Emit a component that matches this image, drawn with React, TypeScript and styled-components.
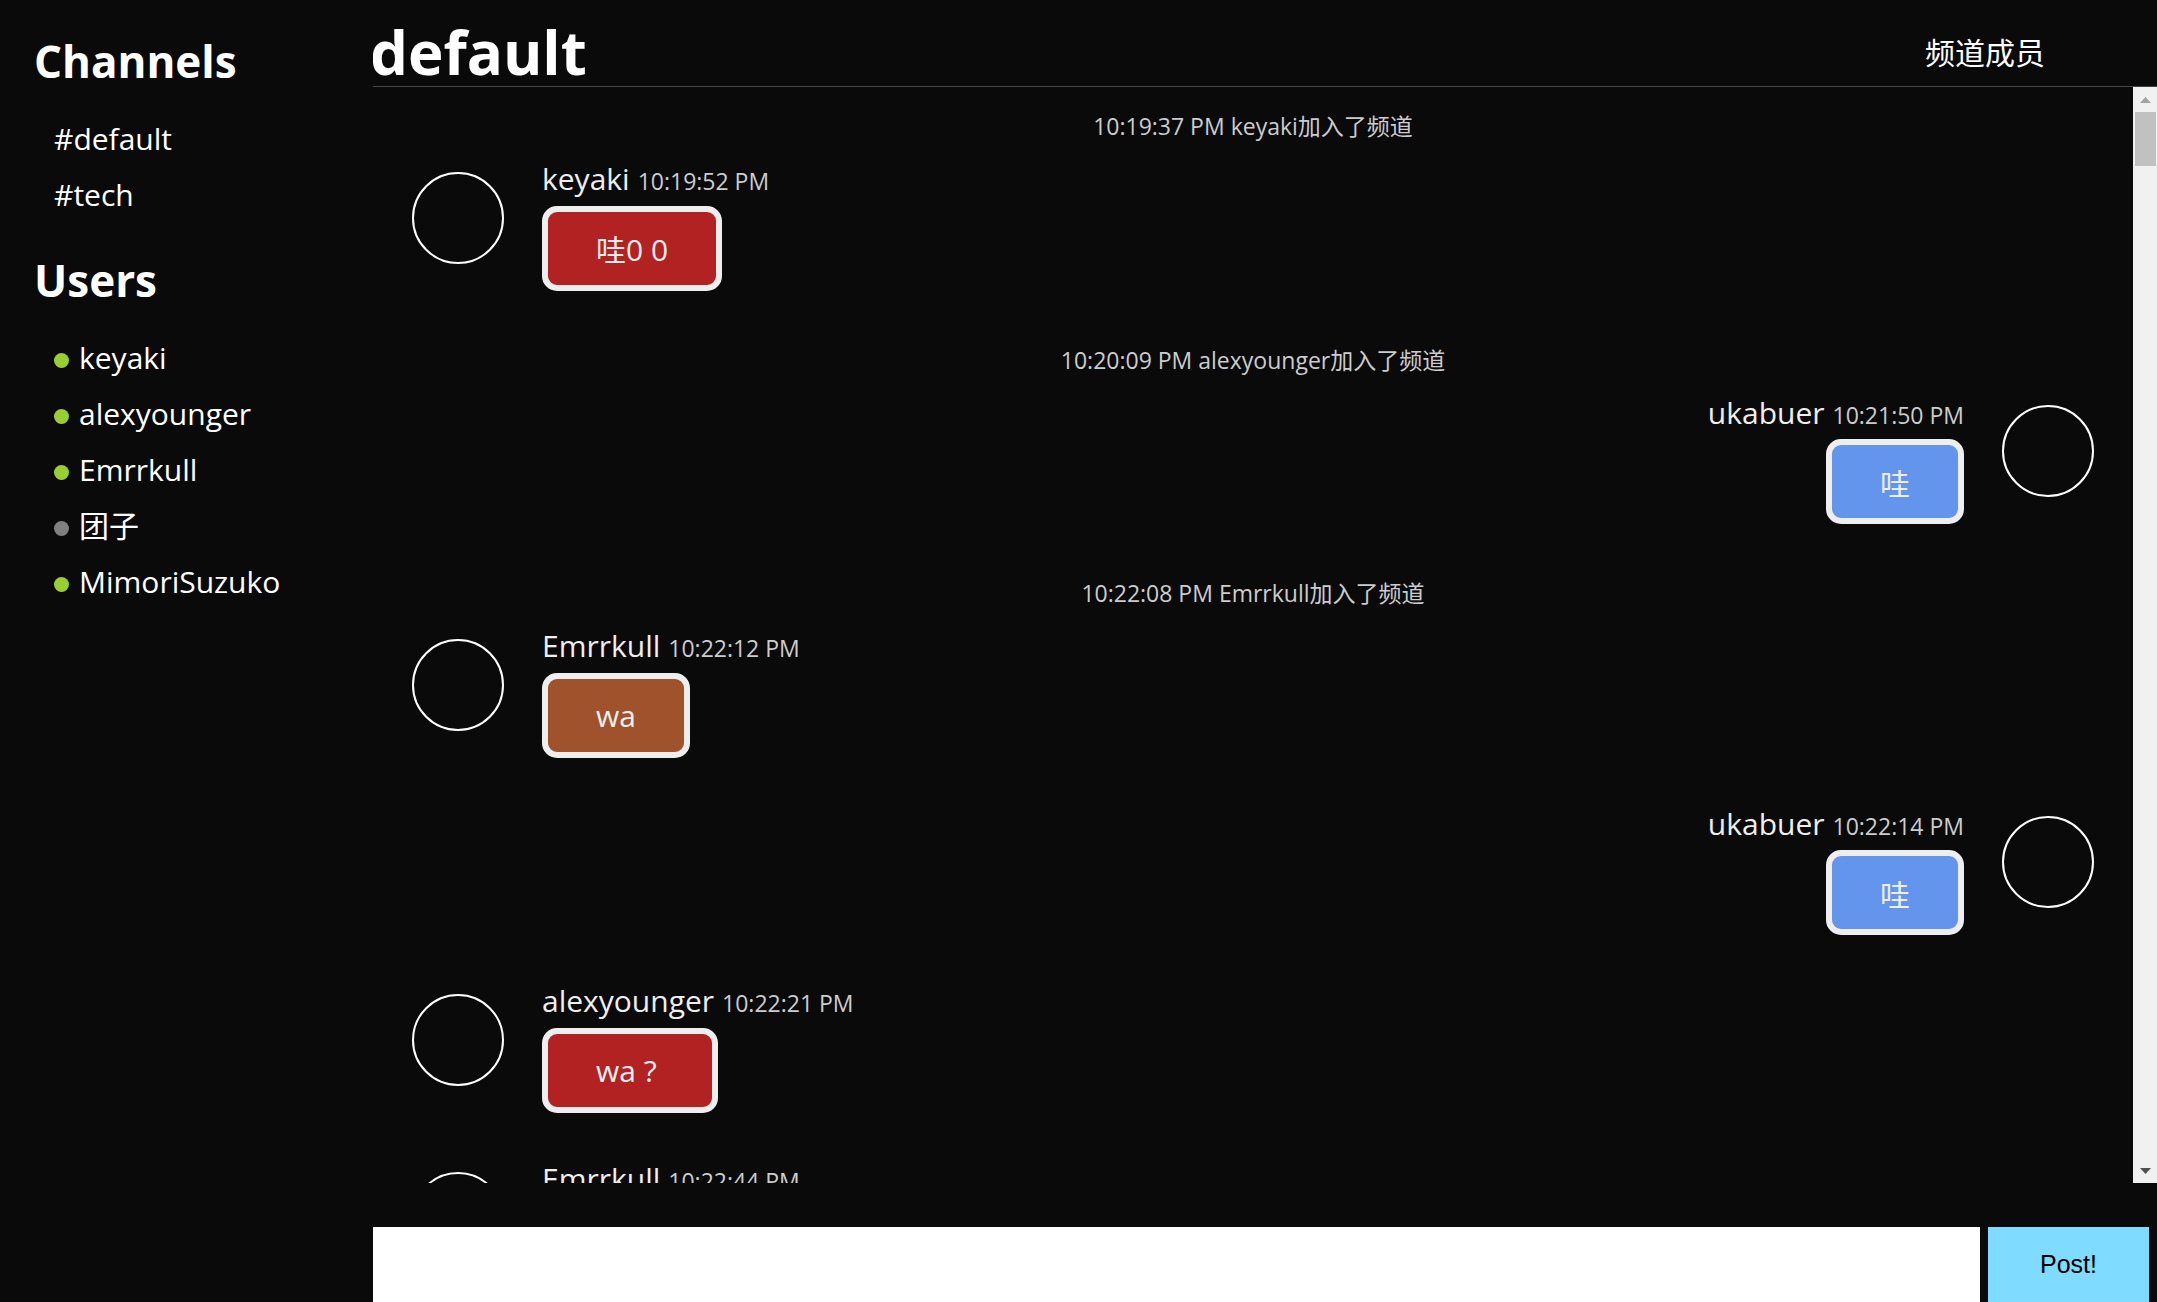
import React from 'react';
import styled, { createGlobalStyle } from 'styled-components';

const FONT = `"Open Sans", "Noto Sans CJK SC", sans-serif`;

const GlobalStyle = createGlobalStyle`
  *, *::before, *::after { box-sizing: border-box; }
  html, body { margin: 0; padding: 0; height: 100%; overflow: hidden; background: #0a0a0a; }
  #root { height: 100%; }
`;

const Layout = styled.div`
  display: grid;
  grid-template-columns: 373px 1fr;
  height: 100vh;
  background: #0a0a0a;
  color: #fff;
  font-family: ${FONT};
`;

/* ---------- sidebar ---------- */
const Sidebar = styled.aside`
  padding: 31px 0 0 34px;
`;

const SectionTitle = styled.h2`
  margin: 0 0 20px;
  height: 60px;
  font-size: 44px;
  line-height: 60px;
  font-weight: 700;
  color: #fff;
`;

const NavList = styled.ul`
  list-style: none;
  margin: 0 0 27px;
  padding: 0 0 0 20px;
`;

const NavItem = styled.li`
  height: 56px;
  font-size: 30px;
  line-height: 56px;
  color: #fff;
  white-space: nowrap;
`;

const StatusDot = styled.span<{ $online: boolean }>`
  display: inline-block;
  width: 15px;
  height: 15px;
  border-radius: 50%;
  margin-right: 10px;
  vertical-align: middle;
  background: ${(p) => (p.$online ? '#9acd32' : '#808080')};
`;

/* ---------- main ---------- */
const Main = styled.main`
  display: flex;
  flex-direction: column;
  min-width: 0;
  height: 100vh;
  overflow: hidden;
`;

const Header = styled.header`
  display: flex;
  justify-content: space-between;
  align-items: flex-start;
  height: 87px;
  flex-shrink: 0;
  padding: 22px 112px 0 0;
  border-bottom: 1px solid #444;
`;

const ChannelTitle = styled.h1`
  margin: 0 0 0 -3px;
  height: 60px;
  font-size: 60px;
  line-height: 60px;
  font-weight: 700;
  color: #fff;
`;

const MembersLink = styled.div`
  margin-top: 16px;
  font-size: 30px;
  line-height: 30px;
  color: #fff;
`;

const MessagePane = styled.div`
  flex: 1;
  min-height: 0;
  display: flex;
`;

const MessageList = styled.div`
  flex: 1;
  min-width: 0;
  overflow: hidden;
  padding-top: 16px;
`;

const ScrollTrack = styled.div`
  flex: 0 0 24px;
  display: flex;
  flex-direction: column;
  background: #f1f1f1;
`;

const ScrollButton = styled.div`
  flex: 0 0 25px;
  display: flex;
  justify-content: center;
  padding-top: 10px;
  svg { display: block; }
`;

const ScrollThumb = styled.div`
  flex: 0 0 54px;
  margin: 0 1px 0 2px;
  background: #c1c1c1;
`;

const ScrollSpacer = styled.div`
  flex: 1;
`;

const SystemLine = styled.div`
  height: 46px;
  margin-bottom: 10px;
  font-size: 23px;
  line-height: 46px;
  text-align: center;
  color: #cccccc;
  white-space: nowrap;
`;

const ChatRow = styled.div<{ $self: boolean }>`
  display: flex;
  flex-direction: ${(p) => (p.$self ? 'row-reverse' : 'row')};
  align-items: flex-start;
  gap: 38px;
  padding: 0 39px;
  margin-bottom: 46px;
`;

const Avatar = styled.div`
  flex-shrink: 0;
  width: 92px;
  height: 92px;
  margin-top: 12.6px;
  border: 2px solid #fff;
  border-radius: 50%;
`;

const ChatBody = styled.div<{ $self: boolean }>`
  display: flex;
  flex-direction: column;
  align-items: ${(p) => (p.$self ? 'flex-end' : 'flex-start')};
`;

const NameLine = styled.div`
  height: 40px;
  font-size: 30px;
  line-height: 40px;
  color: #eeeeee;
  white-space: nowrap;
`;

const Time = styled.span`
  margin-left: 8px;
  font-size: 23px;
  line-height: 1;
  color: #cccccc;
`;

const Bubble = styled.div<{ $color: string }>`
  display: inline-flex;
  align-items: center;
  justify-content: center;
  height: 85px;
  margin-top: 6.6px;
  padding: 0 48px;
  border: 6px solid #eeeeee;
  border-radius: 15px;
  background: ${(p) => p.$color};
  color: #eeeeee;
  font-size: 30px;
  white-space: pre;
`;

const Composer = styled.form`
  display: flex;
  gap: 8px;
  flex-shrink: 0;
  height: 119px;
  padding: 44px 8px 0 0;
`;

const MessageInput = styled.input`
  flex: 1;
  min-width: 0;
  height: 75px;
  margin: 0;
  padding: 0 12px;
  border: none;
  outline: none;
  background: #fff;
  font: 25px ${FONT};
`;

const PostButton = styled.button`
  width: 161px;
  height: 75px;
  padding: 0;
  border: none;
  background: #7fdbff;
  color: #000;
  font: 25px "Liberation Sans", Arial, sans-serif;
  cursor: pointer;
`;

/* ---------- data ---------- */
type Item =
  | { kind: 'system'; time: string; text: string }
  | { kind: 'chat'; user: string; time: string; text: string };

const SELF = 'ukabuer';

const bubbleColor: Record<string, string> = {
  keyaki: '#b22222',
  alexyounger: '#b22222',
  Emrrkull: '#a0522d',
  MimoriSuzuko: '#b22222',
  ukabuer: '#6495ed',
};

const channels = ['default', 'tech'];
const users = [
  { name: 'keyaki', online: true },
  { name: 'alexyounger', online: true },
  { name: 'Emrrkull', online: true },
  { name: '团子', online: false },
  { name: 'MimoriSuzuko', online: true },
];

const items: Item[] = [
  { kind: 'system', time: '10:19:37 PM', text: 'keyaki加入了频道' },
  { kind: 'chat', user: 'keyaki', time: '10:19:52 PM', text: '哇0 0' },
  { kind: 'system', time: '10:20:09 PM', text: 'alexyounger加入了频道' },
  { kind: 'chat', user: 'ukabuer', time: '10:21:50 PM', text: '哇' },
  { kind: 'system', time: '10:22:08 PM', text: 'Emrrkull加入了频道' },
  { kind: 'chat', user: 'Emrrkull', time: '10:22:12 PM', text: 'wa' },
  { kind: 'chat', user: 'ukabuer', time: '10:22:14 PM', text: '哇' },
  { kind: 'chat', user: 'alexyounger', time: '10:22:21 PM', text: 'wa ? ' },
  { kind: 'chat', user: 'Emrrkull', time: '10:22:44 PM', text: '哇哇' },
];

const Arrow = ({ up, color }: { up: boolean; color: string }) => (
  <svg width="11" height="6" viewBox="0 0 11 6">
    <polygon points={up ? '0,6 5.5,0 11,6' : '0,0 5.5,6 11,0'} fill={color} />
  </svg>
);

export default function App() {
  return (
    <>
      <GlobalStyle />
      <Layout>
        <Sidebar>
          <SectionTitle>Channels</SectionTitle>
          <NavList>
            {channels.map((c) => (
              <NavItem key={c}>#{c}</NavItem>
            ))}
          </NavList>
          <SectionTitle>Users</SectionTitle>
          <NavList>
            {users.map((u) => (
              <NavItem key={u.name}>
                <StatusDot $online={u.online} />
                {u.name}
              </NavItem>
            ))}
          </NavList>
        </Sidebar>

        <Main>
          <Header>
            <ChannelTitle>default</ChannelTitle>
            <MembersLink>频道成员</MembersLink>
          </Header>

          <MessagePane>
            <MessageList>
              {items.map((it, i) =>
                it.kind === 'system' ? (
                  <SystemLine key={i}>
                    {it.time} {it.text}
                  </SystemLine>
                ) : (
                  <ChatRow key={i} $self={it.user === SELF}>
                    <Avatar />
                    <ChatBody $self={it.user === SELF}>
                      <NameLine>
                        {it.user}
                        <Time>{it.time}</Time>
                      </NameLine>
                      <Bubble $color={bubbleColor[it.user]}>{it.text}</Bubble>
                    </ChatBody>
                  </ChatRow>
                )
              )}
            </MessageList>
            <ScrollTrack aria-hidden="true">
              <ScrollButton>
                <Arrow up color="#a3a3a3" />
              </ScrollButton>
              <ScrollThumb />
              <ScrollSpacer />
              <ScrollButton>
                <Arrow up={false} color="#505050" />
              </ScrollButton>
            </ScrollTrack>
          </MessagePane>

          <Composer onSubmit={(e) => e.preventDefault()}>
            <MessageInput type="text" />
            <PostButton type="submit">Post!</PostButton>
          </Composer>
        </Main>
      </Layout>
    </>
  );
}
